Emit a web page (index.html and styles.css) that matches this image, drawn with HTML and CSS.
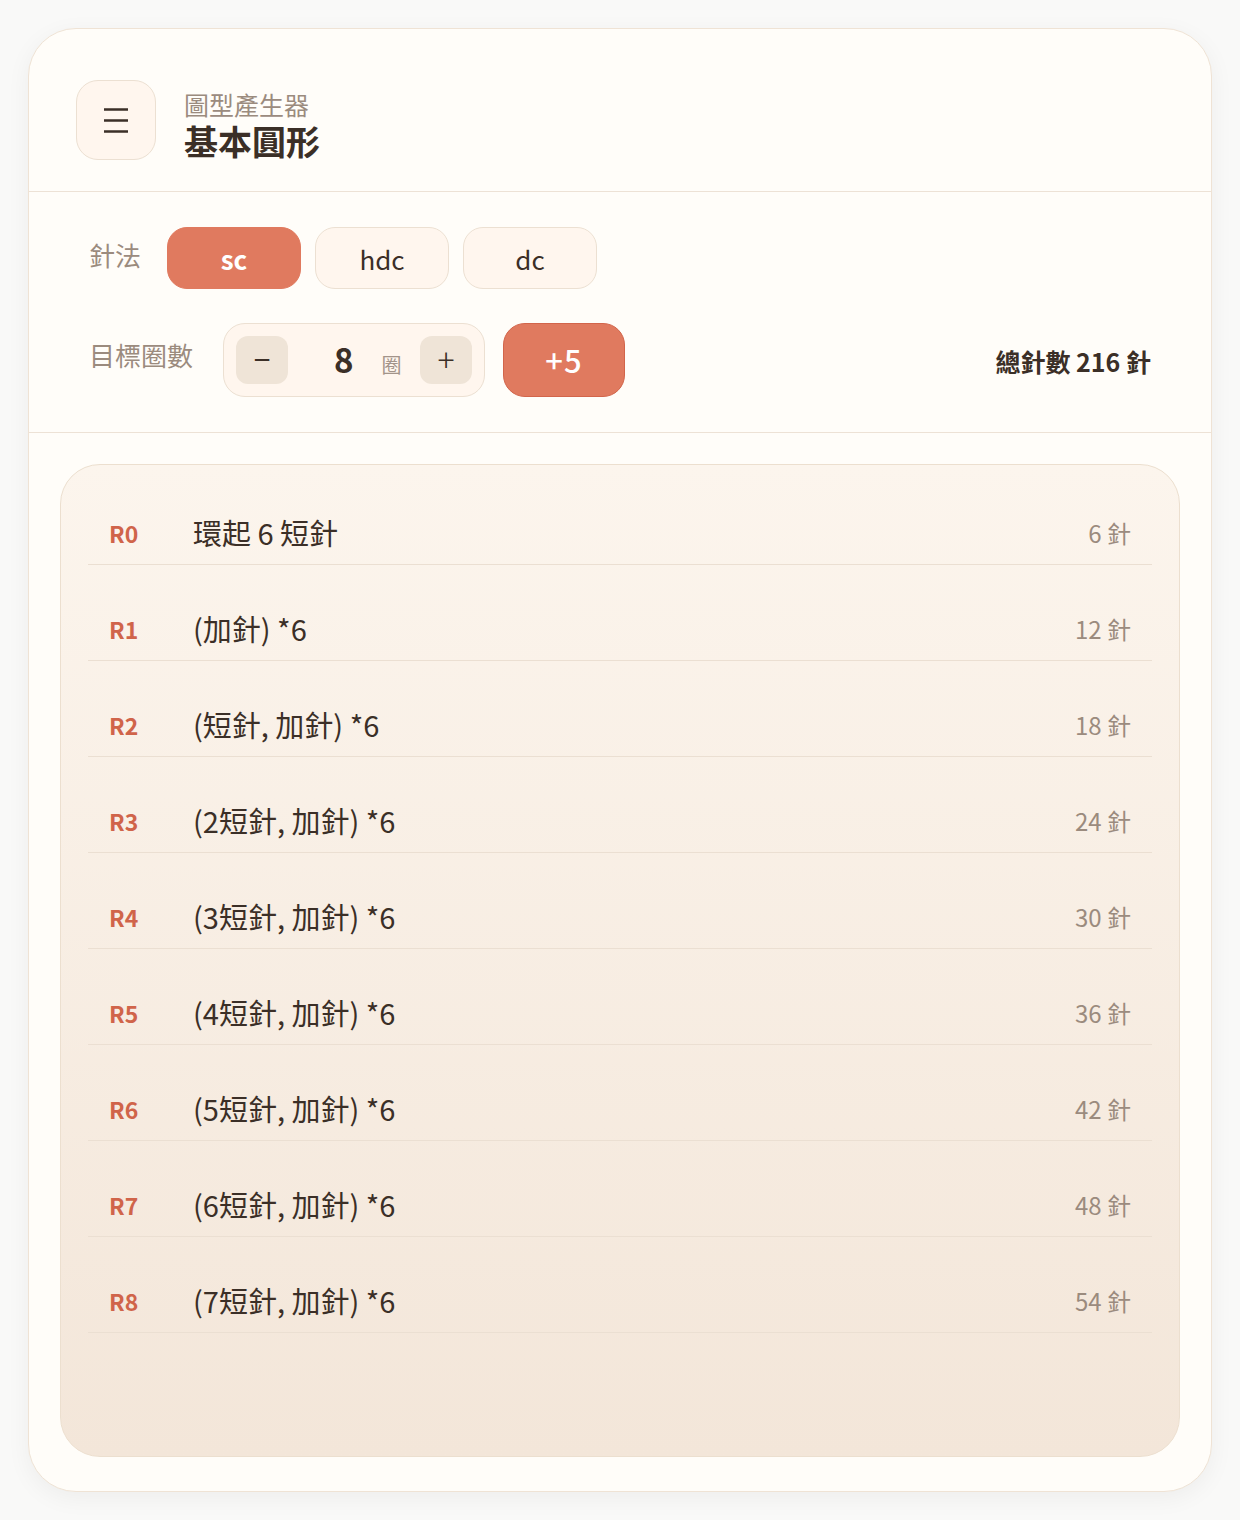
FILE: index.html
```html
<!DOCTYPE html>
<html lang="zh-Hant">
<head>
<meta charset="utf-8">
<title>基本圓形</title>
<link rel="stylesheet" href="styles.css">
</head>
<body>
<div class="card">
  <header class="header">
    <button class="menu-btn" aria-label="menu">
      <svg width="26" height="26" viewBox="0 0 26 26"><path d="M1 2.5H25M1 13.5H25M1 24.5H25" stroke="#3b2f27" stroke-width="2.4" fill="none"/></svg>
    </button>
    <div class="titles">
      <div class="subtitle">圖型產生器</div>
      <h1 class="title">基本圓形</h1>
    </div>
  </header>

  <section class="controls">
    <div class="ctrl-row">
      <span class="ctrl-label">針法</span>
      <button class="chip active">sc</button>
      <button class="chip">hdc</button>
      <button class="chip">dc</button>
    </div>
    <div class="ctrl-row row2">
      <span class="ctrl-label">目標圈數</span>
      <div class="stepper">
        <button class="step-btn">−</button>
        <span class="value">8</span>
        <span class="unit">圈</span>
        <button class="step-btn plus">+</button>
      </div>
      <button class="plus5">+5</button>
      <div class="total">總針數 216 針</div>
    </div>
  </section>

  <section class="panel">
    <div class="row"><span class="rl">R0</span><span class="rt">環起 6 短針</span><span class="rc">6 針</span></div>
    <div class="row"><span class="rl">R1</span><span class="rt">(加針) *6</span><span class="rc">12 針</span></div>
    <div class="row"><span class="rl">R2</span><span class="rt">(短針, 加針) *6</span><span class="rc">18 針</span></div>
    <div class="row"><span class="rl">R3</span><span class="rt">(2短針, 加針) *6</span><span class="rc">24 針</span></div>
    <div class="row"><span class="rl">R4</span><span class="rt">(3短針, 加針) *6</span><span class="rc">30 針</span></div>
    <div class="row"><span class="rl">R5</span><span class="rt">(4短針, 加針) *6</span><span class="rc">36 針</span></div>
    <div class="row"><span class="rl">R6</span><span class="rt">(5短針, 加針) *6</span><span class="rc">42 針</span></div>
    <div class="row"><span class="rl">R7</span><span class="rt">(6短針, 加針) *6</span><span class="rc">48 針</span></div>
    <div class="row"><span class="rl">R8</span><span class="rt">(7短針, 加針) *6</span><span class="rc">54 針</span></div>
  </section>
</div>
</body>
</html>
```

FILE: styles.css
```css
* { box-sizing: border-box; }
html, body { margin: 0; padding: 0; }
body {
  background: #f9f9f8;
  padding: 28px;
  font-family: "Noto Sans CJK TC", "Noto Sans", sans-serif;
  color: #3b2f27;
}
button { font-family: inherit; cursor: pointer; }

.card {
  width: 1184px;
  height: 1464px;
  background: #fffdf9;
  border: 1px solid #efe3d5;
  border-radius: 48px;
  box-shadow: 0 6px 24px rgba(0,0,0,0.05);
  display: flex;
  flex-direction: column;
  overflow: hidden;
}

.header {
  display: flex;
  align-items: center;
  gap: 28px;
  padding: 51px 47px 31px;
  border-bottom: 1.5px solid #ede2d6;
}
.menu-btn {
  width: 80px;
  height: 80px;
  border-radius: 22px;
  background: #fff6ee;
  border: 1.5px solid #ece0d2;
  display: flex;
  align-items: center;
  justify-content: center;
  padding: 0;
  flex-shrink: 0;
}
.titles {
  display: flex;
  flex-direction: column;
  margin-top: 6px;
  margin-bottom: -6px;
}
.subtitle {
  font-size: 25px;
  line-height: 30px;
  color: #9b8b7e;
}
.title {
  margin: 0;
  font-size: 34px;
  line-height: 44px;
  font-weight: 700;
  color: #3b2f27;
}

.controls {
  padding: 35px 60px 35px;
  border-bottom: 1.5px solid #ede2d6;
  display: flex;
  flex-direction: column;
  gap: 34px;
}
.ctrl-row {
  display: flex;
  align-items: center;
  height: 62px;
}
.row2 { height: 74px; }
.ctrl-label {
  font-size: 26px;
  color: #9b8b7e;
  margin-right: 26px;
  padding-bottom: 8px;
}
.row2 .ctrl-label { margin-right: 30px; padding-bottom: 12px; }

.chip {
  width: 134px;
  height: 62px;
  border-radius: 20px;
  background: #fff6ee;
  border: 1.5px solid #ece0d2;
  font-size: 26px;
  color: #3b2f27;
  margin-right: 14px;
  padding: 0;
}
.chip.active {
  background: #e07a5f;
  border-color: #e07a5f;
  color: #fff;
  font-weight: 700;
}

.stepper {
  width: 262px;
  height: 74px;
  border-radius: 22px;
  background: #fff6ee;
  border: 1.5px solid #ece0d2;
  display: flex;
  align-items: center;
  padding: 0 12px;
}
.step-btn {
  width: 52px;
  height: 48px;
  border-radius: 12px;
  border: none;
  background: #efe4d7;
  font-size: 30px;
  line-height: 1;
  color: #3b2f27;
  padding: 0 0 4px;
  display: flex;
  align-items: center;
  justify-content: center;
}
.step-btn.plus { margin-left: auto; font-size: 32px; font-weight: 300; }
.value {
  font-size: 33px;
  font-weight: 700;
  margin-left: 46px;
  line-height: 1;
  padding-bottom: 2px;
}
.unit {
  font-size: 20px;
  color: #a3948a;
  margin-left: 28px;
  padding-top: 8px;
}
.plus5 {
  width: 122px;
  height: 74px;
  margin-left: 18px;
  border-radius: 22px;
  background: #e07a5f;
  border: 1.5px solid #d2654b;
  color: #fff;
  font-size: 31px;
  font-weight: 500;
  letter-spacing: 1px;
  padding: 0 0 2px;
}
.total {
  margin-left: auto;
  font-size: 25px;
  font-weight: 700;
  color: #3b2f27;
  padding-top: 2px;
}

.panel {
  flex: 1;
  margin: 31px 31px 34px;
  border: 1.5px solid #ecdfcf;
  border-radius: 40px;
  background: linear-gradient(180deg, #fcf5ed 0%, #f3e6d9 100%);
  padding: 4px 27px 0;
}
.row {
  height: 96px;
  display: flex;
  align-items: center;
  padding: 31px 21px 0;
  border-bottom: 1.5px solid #ebdfd2;
}
.rl {
  width: 84px;
  font-size: 23px;
  font-weight: 700;
  color: #d0644a;
  padding-top: 2px;
}
.rt {
  flex: 1;
  font-size: 29px;
  color: #3b2f27;
}
.rc {
  font-size: 24px;
  color: #9b8b7e;
}
```
